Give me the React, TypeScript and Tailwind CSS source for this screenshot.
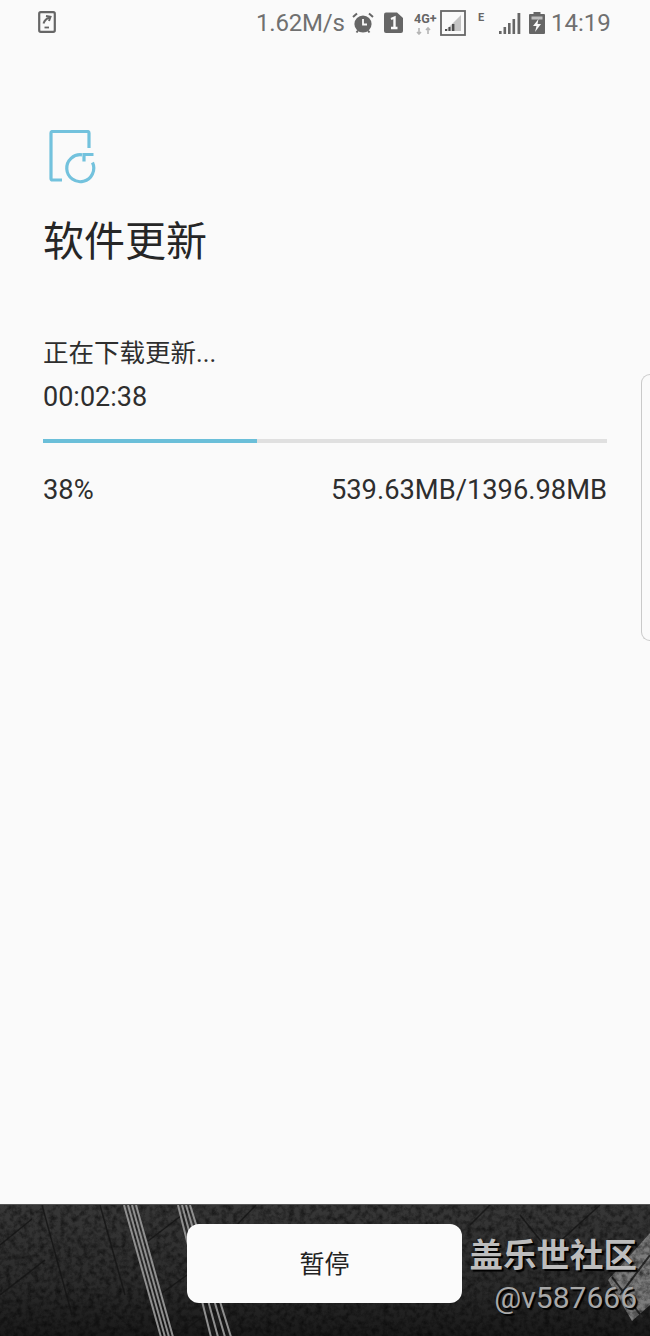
import React from 'react'

const FONT = "font-['Roboto','Noto_Sans_CJK_SC',sans-serif]"

// Status bar glyphs, drawn because they are Samsung specific
const CastIcon = () => (
  <svg width="18" height="22" viewBox="0 0 18 22" fill="none" stroke="#666" className="mb-[2px]">
    <rect x="1.2" y="1.2" width="15.6" height="19.6" rx="1.5" strokeWidth="2.2" />
    <path d="M5.5 12.5 C6.5 9.5 8.5 7.5 11.5 6.5 M8 5 L12.5 5.8 L11 10" strokeWidth="2" />
    <path d="M6.5 16.5 H11" strokeWidth="1.8" />
  </svg>
)

const AlarmIcon = () => (
  <svg width="22" height="22" viewBox="0 0 22 22">
    <circle cx="11" cy="12" r="8.6" fill="#666" />
    <path d="M11 7 V12.5 H15" fill="none" stroke="#fafafa" strokeWidth="1.8" />
    <path d="M1 5 L5 1.5 M21 5 L17 1.5 M4.5 20.5 L6 18.5 M17.5 20.5 L16 18.5" stroke="#666" strokeWidth="2" />
  </svg>
)

const SimIcon = () => (
  <svg width="19" height="21" viewBox="0 0 19 21">
    <path d="M2 0.5 H13 L19 6 V19 Q19 21 17 21 H2 Q0 21 0 19 V2.5 Q0 0.5 2 0.5 Z" fill="#666" />
    <path d="M7 7 L10.5 5.5 V16 M7 16 H13.5" fill="none" stroke="#fafafa" strokeWidth="2.4" />
  </svg>
)

const FourGIcon = () => (
  <svg width="24" height="24" viewBox="0 0 24 24">
    <path d="M5 17 V23 M3 21 L5 23 L7 21" fill="none" stroke="#b5b5b5" strokeWidth="1.6" />
    <path d="M14 23 V17 M12 19 L14 17 L16 19" fill="none" stroke="#b5b5b5" strokeWidth="1.6" />
    <text x="0" y="12" fontSize="12.5" fontWeight="700" fill="#666" fontFamily="Roboto, sans-serif">
      4G+
    </text>
  </svg>
)

const BoxSignalIcon = () => (
  <svg width="26" height="26" viewBox="0 0 26 26">
    <rect x="1" y="1" width="24" height="24" fill="none" stroke="#666" strokeWidth="1.8" />
    <path d="M21 5 V21 H5 Z" fill="#c4c4c4" />
    <path d="M5 19 h2 v2 h-2 Z M8.5 17 h2 v4 h-2 Z M12 14 h2.4 v7 h-2.4 Z" fill="#4d4d4d" />
  </svg>
)

const BarsIcon = () => (
  <svg width="22" height="22" viewBox="0 0 22 22" fill="#666">
    <rect x="0" y="19" width="2.6" height="3" />
    <rect x="4.5" y="15" width="2.6" height="7" />
    <rect x="9" y="11" width="2.6" height="11" />
    <rect x="13.5" y="7" width="2.6" height="15" />
    <rect x="18.5" y="1" width="2.8" height="21" />
  </svg>
)

const BatteryIcon = () => (
  <svg width="16" height="22" viewBox="0 0 16 22">
    <path d="M4.5 0 H11.5 V2 H15 Q16 2 16 3 V21 Q16 22 15 22 H1 Q0 22 0 21 V3 Q0 2 1 2 H4.5 Z" fill="#666" />
    <rect x="2.5" y="4.5" width="11" height="3" fill="#bdbdbd" />
    <path d="M9.5 7 L4 14 H7.5 L6 20 L12 12 H8.5 Z" fill="#fafafa" />
  </svg>
)

const UpdateIcon = () => (
  <svg width="50" height="56" viewBox="0 0 50 56" fill="none" stroke="#73c2dd" strokeWidth="3.2" className="ml-[6px] mt-px block">
    <path d="M13 50 H3.5 Q2 50 2 48.5 V3 Q2 1.5 3.5 1.5 H38.5 Q40 1.5 40 3 V18" />
    <path d="M33 24.8 A13.5 13.5 0 1 0 43.5 32.5" />
    <path d="M44.5 24.5 L35 24.5 L35 31.5" />
  </svg>
)

// Wallpaper showing through behind the button
const Wallpaper = () => (
  <svg className="absolute inset-0" width="650" height="132" viewBox="0 0 650 132">
    <defs>
      <linearGradient id="bg" x1="0" y1="0" x2="0" y2="1">
        <stop offset="0" stopColor="#373737" />
        <stop offset="0.6" stopColor="#2b2b2b" />
        <stop offset="1" stopColor="#191919" />
      </linearGradient>
      <filter id="noise">
        <feTurbulence type="fractalNoise" baseFrequency="0.18" numOctaves="4" seed="4" />
        <feColorMatrix values="0 0 0 0 0  0 0 0 0 0  0 0 0 0 0  0 0 0 1.1 -0.4" />
      </filter>
    </defs>
    <rect width="650" height="132" fill="url(#bg)" />
    <path d="M608 75 L650 28 V100 L632 116 Z" fill="#7c7c7c" />
    <path d="M612 72 L642 112 M650 50 L620 90" stroke="#2a2a2a" strokeWidth="2" />
    <rect width="650" height="132" filter="url(#noise)" />
    <g stroke="#141414" strokeWidth="1.5" fill="none" opacity="0.8">
      <path d="M42 0 L72 110 M0 40 L32 14 M100 0 L125 90 M0 90 L45 55" />
      <path d="M148 36 L190 4 M162 88 L190 68 M175 132 L205 110" />
      <path d="M232 25 L256 0 M470 20 L490 0 M520 10 L560 60 M600 0 L545 50" />
    </g>
    <g stroke="#8f8f8f" strokeWidth="2" fill="none">
      <path d="M124 0 L161 132 M128 0 L165 132 M132 0 L169 132 M136 0 L173 132" />
      <path d="M178 0 L211 132 M182 0 L218 132 M186 0 L225 132 M190 0 L231 132" />
    </g>
  </svg>
)

export default function App() {
  return (
    <div className={`${FONT} relative flex h-[1336px] w-[650px] flex-col overflow-hidden bg-[#fafafa] text-[#2e2e2e]`}>
      {/* status bar */}
      <div className="flex h-[44px] items-center pl-[38px] pt-px">
        <CastIcon />
        <span className="ml-[200px] w-[96px] text-[24px] leading-none tracking-[-0.2px] text-[#707070]">1.62M/s</span>
        <AlarmIcon />
        <span className="ml-[10px] flex"><SimIcon /></span>
        <span className="ml-[11px] flex"><FourGIcon /></span>
        <span className="ml-[2px] flex"><BoxSignalIcon /></span>
        <span className="mb-[10px] ml-[12px] w-[21px] text-[11px] font-bold leading-none text-[#666]">E</span>
        <BarsIcon />
        <span className="ml-[8px] flex"><BatteryIcon /></span>
        <span className="ml-[6px] text-[24px] leading-none text-[#707070]">14:19</span>
      </div>

      {/* main content */}
      <div className="flex flex-1 flex-col px-[43px] pt-[85px]">
        <UpdateIcon />
        <h1 className="mt-[28px] text-[41px] font-normal leading-[56px] text-[#262626]">软件更新</h1>
        <p className="mt-[65px] text-[25.5px] leading-[36px]">正在下载更新...</p>
        <p className="mt-[8px] text-[27px] leading-[36px]">00:02:38</p>
        <div className="mt-[24px] h-[4px] w-[564px] bg-[#e0e0e0]">
          <div className="h-full w-[214px] bg-[#6bbfd9]" />
        </div>
        <div className="mt-[29px] flex items-center justify-between text-[27.3px] leading-[36px]">
          <span>38%</span>
          <span>539.63MB/1396.98MB</span>
        </div>
      </div>

      {/* pause button on wallpaper */}
      <div className="relative h-[132px] border-t border-[#555] pl-[187px] pt-[19px]">
        <Wallpaper />
        <button className="relative flex h-[79px] w-[275px] items-center justify-center rounded-[12px] bg-[#fbfbfb] pt-[3px] text-[25px] text-[#222]">
          暂停
        </button>
      </div>

      {/* watermark */}
      <div className="absolute left-[467px] top-[1235px] flex w-[170px] flex-col items-end">
        <span className="text-[33.5px] font-bold leading-[42px] text-[#bdbdbd] [text-shadow:2px_2px_1px_#000]">盖乐世社区</span>
        <span className="mt-[3px] text-[30px] leading-[36px] text-[#a8a8a8] [text-shadow:2px_2px_1px_#000]">@v587666</span>
      </div>

      {/* edge panel handle */}
      <div className="absolute left-[641px] top-[374px] h-[267px] w-[9px] rounded-l-[10px] border-y border-l border-[#c9c9c9]" />
    </div>
  )
}
